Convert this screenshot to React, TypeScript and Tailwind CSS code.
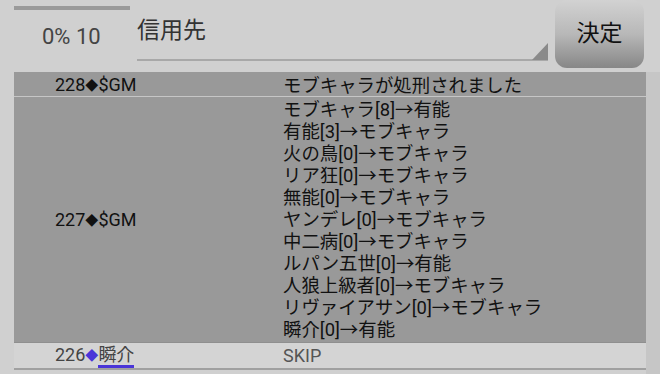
import React from "react";

const lines = [
  "モブキャラ[8]→有能",
  "有能[3]→モブキャラ",
  "火の鳥[0]→モブキャラ",
  "リア狂[0]→モブキャラ",
  "無能[0]→モブキャラ",
  "ヤンデレ[0]→モブキャラ",
  "中二病[0]→モブキャラ",
  "ルパン五世[0]→有能",
  "人狼上級者[0]→モブキャラ",
  "リヴァイアサン[0]→モブキャラ",
  "瞬介[0]→有能",
];

const font = { fontFamily: 'Roboto, "Noto Sans CJK JP", sans-serif' };

function Dia({ className = "" }: { className?: string }) {
  return <span className={"text-[13px] align-[1px] " + className}>◆</span>;
}

export default function App() {
  return (
    <div className="w-[660px] h-[374px] bg-[#d0d0d0] overflow-hidden relative" style={font}>
      <div className="flex h-[72px]">
        <div className="w-[137px] pl-[14px] flex flex-col">
          <div className="mt-[6px] h-[4px] w-[116px] bg-[#9a9a9a]" />
          <div className="mt-[14px] pl-[28px] text-[22px] leading-[26px] text-[#444]">0% 10</div>
        </div>
        <div className="w-[411px] relative">
          <div className="pt-[16px] text-[23px] leading-[30px] text-[#333]">信用先</div>
          <div className="absolute left-0 right-0 top-[59px] h-[2px] bg-[#a8a8a8]" />
          <svg className="absolute right-0 top-[43px]" width="16" height="17" viewBox="0 0 16 17">
            <polygon points="16,0 16,17 0,17" fill="#8a8a8a" />
          </svg>
        </div>
        <div className="ml-[7px] w-[89px] h-[68px] rounded-[12px] bg-gradient-to-b from-[#d2d2d2] via-[#b8b8b8] to-[#878787] flex items-center justify-center text-[23px] text-[#111]">
          決定
        </div>
      </div>
      <div className="flex">
        <div className="ml-[14px] w-[632px]">
          <div className="grid grid-cols-[269px_1fr] bg-[#999999] h-[25px] items-center text-[18px] text-[#111] border-b border-[#c6c6c6]">
            <div className="pl-[41px] leading-[25px]">228<Dia />$GM</div>
            <div className="leading-[25px] text-[18.4px]">モブキャラが処刑されました</div>
          </div>
          <div className="grid grid-cols-[269px_1fr] bg-[#999999] h-[246px] items-center text-[18px] text-[#111] border-b border-[#8f8f8f]">
            <div className="pl-[41px]">227<Dia />$GM</div>
            <div className="flex flex-col text-[18.4px]">
              {lines.map((l, i) => (
                <div key={i} className="leading-[22px]">{l}</div>
              ))}
            </div>
          </div>
          <div className="grid grid-cols-[269px_1fr] bg-[#d4d4d4] h-[27px] items-center text-[18px] text-[#444] border-b-2 border-[#a0a0a0]">
            <div className="pl-[41px] leading-[24px]">
              226<Dia className="text-[#4a35d8]" />
              <span className="border-b-[3px] border-[#4a35d8]">瞬介</span>
            </div>
            <div className="leading-[24px] text-[#555]">SKIP</div>
          </div>
        </div>
        <div className="w-[14px] h-[400px] bg-[#c6c6c6]" />
      </div>
    </div>
  );
}
